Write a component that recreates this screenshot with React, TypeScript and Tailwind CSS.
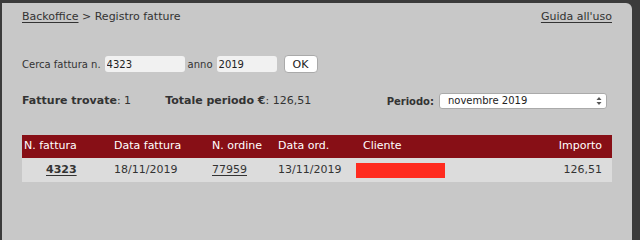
const font = "font-['DejaVu_Sans',Verdana,sans-serif]";

function Arrows() {
  return (
    <svg width="6" height="10" viewBox="0 0 6 10" className="pointer-events-none absolute right-[5px] top-1/2 -translate-y-1/2">
      <path d="M3 1 L5.5 4 H0.5 Z" fill="#555" />
      <path d="M3 9 L5.5 6 H0.5 Z" fill="#555" />
    </svg>
  );
}

export default function App() {
  return (
    <div className={`${font} w-[640px] min-h-screen h-[204px] flex flex-col bg-[#3b3b3b] pt-[3px] pl-[2px] overflow-hidden text-[11px] text-[#333]`}>
      <div className="w-[630px] flex-1 bg-[#c8c8c8] rounded-tr-[6px] px-[20px]">
        {/* Breadcrumb */}
        <div className="flex justify-between pt-[7px] leading-[13px]">
          <div>
            <a className="underline underline-offset-2">Backoffice</a> &gt; Registro fatture
          </div>
          <a className="underline underline-offset-2">Guida all'uso</a>
        </div>

        {/* Search */}
        <div className="mt-[32px] flex items-center h-[18px] text-[10px]">
          <span>Cerca fattura n.</span>
          <input
            defaultValue="4323"
            className="ml-[4px] w-[80px] h-[16px] px-[2px] rounded-[3px] bg-[#f1f1f1] text-[10px] text-[#222] outline-none"
          />
          <span className="ml-[3px]">anno</span>
          <input
            defaultValue="2019"
            className="ml-[4px] w-[60px] h-[16px] px-[2px] rounded-[3px] bg-[#f1f1f1] text-[10px] text-[#222] outline-none"
          />
          <button className="ml-[7px] w-[34px] h-[18px] rounded-[4px] bg-white border border-[#aaa] text-[11px] leading-none text-[#222]">
            OK
          </button>
        </div>

        {/* Stats */}
        <div className="mt-[20px] flex items-center h-[16px]">
          <span>
            <b>Fatture trovate</b>: 1
          </span>
          <span className="ml-[34px]">
            <b>Totale periodo €</b>: 126,51
          </span>
          <span className="ml-auto mr-[5px] font-bold text-[10px]">Periodo:</span>
          <div className="relative w-[168px] h-[16px] mr-[5px]">
            <select
              defaultValue="nov"
              className="appearance-none w-full h-full bg-white border border-[#aaa] rounded-[3px] pl-[8px] text-[10px] leading-[14px] text-[#222] outline-none"
            >
              <option value="nov">novembre 2019</option>
            </select>
            <Arrows />
          </div>
        </div>

        {/* Table */}
        <table className="mt-[26px] w-[590px] border-collapse">
          <thead>
            <tr className="bg-[#870f16] text-white h-[23px] text-left">
              <th className="font-normal pl-[2px] w-[90px]">N. fattura</th>
              <th className="font-normal pl-[2px] w-[98px]">Data fattura</th>
              <th className="font-normal pl-[2px] w-[66px]">N. ordine</th>
              <th className="font-normal pl-[2px] w-[78px]">Data ord.</th>
              <th className="font-normal pl-[9px]">Cliente</th>
              <th className="font-normal pr-[10px] text-right">Importo</th>
            </tr>
          </thead>
          <tbody>
            <tr className="bg-[#dcdcdc] h-[24px]">
              <td className="pl-[24px]">
                <a className="font-bold underline underline-offset-2">4323</a>
              </td>
              <td className="pl-[2px]">18/11/2019</td>
              <td className="pl-[2px]">
                <a className="underline underline-offset-2">77959</a>
              </td>
              <td className="pl-[2px]">13/11/2019</td>
              <td className="pl-[2px]">
                <div className="w-[89px] h-[15px] bg-[#ff2b1f]" />
              </td>
              <td className="pr-[10px] text-right">126,51</td>
            </tr>
          </tbody>
        </table>
      </div>
    </div>
  );
}
